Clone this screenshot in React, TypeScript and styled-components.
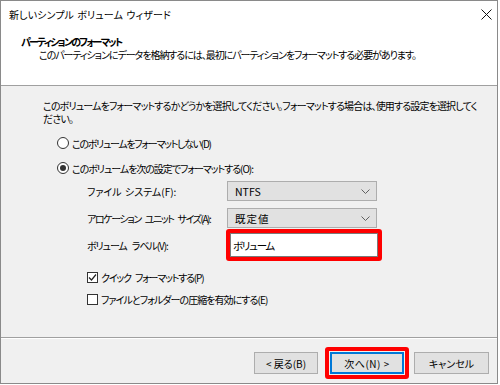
import React from "react";
import styled, { createGlobalStyle } from "styled-components";

const GlobalStyle = createGlobalStyle`
  html, body { margin: 0; padding: 0; background: #ffffff; }
  body {
    font-family: "Noto Sans CJK JP", "Noto Sans", sans-serif;
    font-size: 10px;
    color: #000;
    font-feature-settings: "palt";
    font-variant-east-asian: proportional-width;
  }
  * { box-sizing: border-box; }
`;

const Window = styled.div`
  width: 498px;
  height: 384px;
  border: 1px solid #8a8a8a;
  display: flex;
  flex-direction: column;
  background: #f0f0f0;
  overflow: hidden;
`;

const Header = styled.div`
  height: 85px;
  background: #ffffff;
  border-bottom: 1px solid #a0a0a0;
  display: flex;
  flex-direction: column;
`;

const TitleBar = styled.div`
  height: 27px;
  display: flex;
  align-items: center;
  justify-content: space-between;
  padding: 0 5px 0 8px;
`;

const Title = styled.span`
  line-height: 14px;
  white-space: nowrap;
  letter-spacing: 0.1px;
  word-spacing: 1px;
`;

const HeaderBody = styled.div`
  padding: 7px 0 0 20px;
  display: flex;
  flex-direction: column;
`;

const Heading = styled.div`
  font-weight: 700;
  line-height: 14px;
  white-space: nowrap;
  letter-spacing: -1.8px;
  font-feature-settings: "palt" 1;
`;

const SubHeading = styled.div`
  line-height: 12px;
  padding-left: 18px;
  white-space: nowrap;
  letter-spacing: -1.05px;
`;

const Body = styled.div`
  height: 251px;
  padding: 13px 0 0 42px;
  display: flex;
  flex-direction: column;
`;

const Paragraph = styled.p`
  margin: 0;
  line-height: 13px;
  white-space: nowrap;
  letter-spacing: -0.85px;
`;

const OptionRow = styled.label<{ $mt: number; $ml: number }>`
  display: flex;
  align-items: center;
  height: 16px;
  margin-top: ${(p) => p.$mt}px;
  margin-left: ${(p) => p.$ml}px;
  gap: 3px;
  white-space: nowrap;
`;

const OptionText = styled.span<{ $ls: number }>`
  letter-spacing: ${(p) => p.$ls}px;
  word-spacing: 3px;
`;

const RadioCircle = styled.span<{ $checked?: boolean }>`
  width: 12px;
  height: 12px;
  border: 1px solid #333;
  border-radius: 50%;
  background: #fff;
  display: flex;
  align-items: center;
  justify-content: center;
  &::after {
    content: "";
    width: 6px;
    height: 6px;
    border-radius: 50%;
    background: ${(p) => (p.$checked ? "#333" : "transparent")};
  }
`;

const CheckBox = styled.span`
  width: 11px;
  height: 11px;
  border: 1px solid #333;
  background: #fff;
  display: flex;
  align-items: center;
  justify-content: center;
`;

const FormRow = styled.div<{ $mt: number; $h: number }>`
  display: flex;
  align-items: center;
  height: ${(p) => p.$h}px;
  margin-top: ${(p) => p.$mt}px;
  margin-left: 44px;
`;

const FieldLabel = styled.span<{ $ls: number; $ws: number }>`
  width: 140px;
  white-space: nowrap;
  letter-spacing: ${(p) => p.$ls}px;
  word-spacing: ${(p) => p.$ws}px;
`;

const Select = styled.div`
  width: 150px;
  height: 20px;
  background: #e1e1e1;
  border: 1px solid #adadad;
  display: flex;
  align-items: center;
  justify-content: space-between;
  padding: 0 6px 0 7px;
`;

const SelectValue = styled.span<{ $ls: number }>`
  letter-spacing: ${(p) => p.$ls}px;
  font-size: 10.5px;
`;

const Highlight = styled.div<{ $m: string }>`
  border: 4px solid #ff0000;
  border-radius: 3px;
  margin: ${(p) => p.$m};
  display: flex;
`;

const TextInput = styled.div`
  width: 148px;
  height: 24px;
  background: #fff;
  border: 1px solid #7a7a7a;
  display: flex;
  align-items: center;
  padding-left: 2px;
  letter-spacing: -1.3px;
  font-size: 10.5px;
`;

const Footer = styled.div`
  flex: 1;
  border-top: 1px solid #a0a0a0;
  box-shadow: inset 0 1px 0 #ffffff;
  display: flex;
  align-items: flex-start;
  justify-content: flex-end;
  padding: 14px 8px 0 0;
`;

const ButtonGroup = styled.div`
  display: flex;
  align-items: center;
  gap: 12px;
  margin-right: 10px;
`;

const Button = styled.button<{ $w: number; $default?: boolean; $ls: number }>`
  width: ${(p) => p.$w}px;
  height: 22px;
  background: #e1e1e1;
  border: ${(p) => (p.$default ? "2px solid #0078d7" : "1px solid #adadad")};
  margin: ${(p) => (p.$default ? "1px" : "0")};
  font: inherit;
  letter-spacing: ${(p) => p.$ls}px;
  color: #000;
  padding: 0;
  display: flex;
  align-items: center;
  justify-content: center;
  white-space: nowrap;
`;

const Chevron = () => (
  <svg width="9" height="5" viewBox="0 0 9 5">
    <path d="M0.5 0.5 L4.5 4.5 L8.5 0.5" fill="none" stroke="#606060" strokeWidth="1" />
  </svg>
);

const CloseIcon = () => (
  <svg width="11" height="11" viewBox="0 0 11 11">
    <path d="M0.5 0.5 L10.5 10.5 M10.5 0.5 L0.5 10.5" stroke="#111" strokeWidth="1" />
  </svg>
);

const CheckMark = () => (
  <svg width="9" height="9" viewBox="0 0 9 9">
    <path d="M1 4.5 L3.5 7 L8 1.5" fill="none" stroke="#222" strokeWidth="1.2" />
  </svg>
);

export default function App() {
  return (
    <>
      <GlobalStyle />
      <Window>
        <Header>
          <TitleBar>
            <Title>新しいシンプル ボリューム ウィザード</Title>
            <CloseIcon />
          </TitleBar>
          <HeaderBody>
            <Heading>パーティションのフォーマット</Heading>
            <SubHeading>
              このパーティションにデータを格納するには、最初にパーティションをフォーマットする必要があります。
            </SubHeading>
          </HeaderBody>
        </Header>
        <Body>
          <Paragraph>
            このボリュームをフォーマットするかどうかを選択してください。フォーマットする場合は、使用する設定を選択してく
            <br />
            ださい。
          </Paragraph>
          <OptionRow $mt={10} $ml={14}>
            <RadioCircle />
            <OptionText $ls={-1.3}>このボリュームをフォーマットしない(D)</OptionText>
          </OptionRow>
          <OptionRow $mt={9} $ml={14}>
            <RadioCircle $checked />
            <OptionText $ls={-1.05}>このボリュームを次の設定でフォーマットする(O):</OptionText>
          </OptionRow>
          <FormRow $mt={5} $h={20}>
            <FieldLabel $ls={0} $ws={1}>ファイル システム(F):</FieldLabel>
            <Select>
              <SelectValue $ls={0}>NTFS</SelectValue>
              <Chevron />
            </Select>
          </FormRow>
          <FormRow $mt={7} $h={20}>
            <FieldLabel $ls={-1.4} $ws={3}>アロケーション ユニット サイズ(A):</FieldLabel>
            <Select>
              <SelectValue $ls={1}>既定値</SelectValue>
              <Chevron />
            </Select>
          </FormRow>
          <FormRow $mt={1} $h={32}>
            <FieldLabel $ls={-1.1} $ws={4}>ボリューム ラベル(V):</FieldLabel>
            <Highlight $m="0 0 0 -1px">
              <TextInput>ボリューム</TextInput>
            </Highlight>
          </FormRow>
          <OptionRow $mt={8} $ml={44}>
            <CheckBox>
              <CheckMark />
            </CheckBox>
            <OptionText $ls={-1.2}>クイック フォーマットする(P)</OptionText>
          </OptionRow>
          <OptionRow $mt={6} $ml={44}>
            <CheckBox />
            <OptionText $ls={-0.95}>ファイルとフォルダーの圧縮を有効にする(E)</OptionText>
          </OptionRow>
        </Body>
        <Footer>
          <ButtonGroup>
            <Button $w={64} $ls={0}>&lt; 戻る(B)</Button>
            <Highlight $m="-5px">
              <Button $w={74} $default $ls={0.5}>
                次へ(N) &gt;
              </Button>
            </Highlight>
          </ButtonGroup>
          <Button $w={75} $ls={0}>キャンセル</Button>
        </Footer>
      </Window>
    </>
  );
}
